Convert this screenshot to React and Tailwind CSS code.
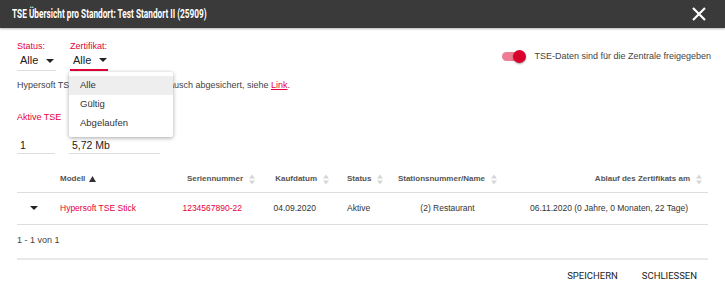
const RED = 'text-[#e4003b]'

function SortIcon({ active }) {
  if (active) {
    return (
      <svg width="7" height="6" viewBox="0 0 7 6" className="ml-1 mb-[3px]">
        <path d="M0 6 L3.5 0 L7 6 Z" fill="#333" />
      </svg>
    )
  }
  return (
    <svg width="6" height="11" viewBox="0 0 6 11" className="ml-[6px] shrink-0">
      <path d="M0 4.5 L3 0.5 L6 4.5 Z" fill="#d6d6d6" />
      <path d="M0 6.5 L3 10.5 L6 6.5 Z" fill="#d6d6d6" />
    </svg>
  )
}

function Caret() {
  return (
    <svg width="8" height="4" viewBox="0 0 8 4">
      <path d="M0 0 L8 0 L4 4 Z" fill="#222" />
    </svg>
  )
}

export default function App() {
  return (
    <div className="w-[725px] h-[298px] bg-white font-['Liberation_Sans',Arial,sans-serif] text-[#333] overflow-hidden">
      {/* Kopf */}
      <div className="h-[28px] bg-[#3a3a3a] flex items-center justify-between pl-[12px] pr-[19px] shadow-[0_1px_2px_rgba(0,0,0,0.3)]">
        <h1 className="text-white text-[12px] font-bold font-['Roboto',sans-serif] whitespace-nowrap origin-left scale-x-[0.69]">
          TSE Übersicht pro Standort: Test Standort II (25909)
        </h1>
        <svg width="14" height="14" viewBox="0 0 14 14">
          <path d="M1 1 L13 13 M13 1 L1 13" stroke="#fff" strokeWidth="2.2" />
        </svg>
      </div>

      <div className="px-[17px]">
        {/* Filter */}
        <div className="flex items-start justify-between pt-[13px]">
          <div className="flex gap-[14px]">
            <div className="w-[39px]">
              <div className={`text-[9px] leading-[10px] ${RED}`}>Status:</div>
              <div className="flex items-center gap-[8px] h-[20px] pl-[3px] border-b border-[#ddd] text-[11px] text-[#222]">
                Alle <Caret />
              </div>
            </div>
            <div className="relative w-[38px]">
              <div className={`text-[9px] leading-[10px] ${RED}`}>Zertifikat:</div>
              <div className="flex items-center gap-[8px] h-[20px] pl-[3px] border-b-2 border-[#e4003b] text-[11px] text-[#222]">
                Alle <Caret />
              </div>
              <div className="absolute left-[-1px] top-[31px] z-10 w-[104px] bg-white rounded-[2px] shadow-[0_1px_4px_rgba(0,0,0,0.35)] py-[4px] text-[9.5px] text-[#333]">
                <div className="h-[19px] flex items-center pl-[11px] bg-[#eee]">Alle</div>
                <div className="h-[19px] flex items-center pl-[11px]">Gültig</div>
                <div className="h-[19px] flex items-center pl-[11px]">Abgelaufen</div>
              </div>
            </div>
          </div>
          <div className="flex items-center gap-[8px] mr-[-3px] pt-[9px]">
            <div className="relative w-[24px] h-[12px] flex items-center">
              <div className="w-[22px] h-[9px] rounded-full bg-[#ee7d93]" />
              <div className="absolute right-0 w-[13px] h-[13px] rounded-full bg-[#d9002d] shadow-[0_1px_2px_rgba(0,0,0,0.35)]" />
            </div>
            <span className="text-[9px] text-[#444]">TSE-Daten sind für die Zentrale freigegeben</span>
          </div>
        </div>

        <p className="mt-[8px] text-[9px] text-[#444]">
          Hypersoft TSE-Daten sind gegen Austausch abgesichert, siehe{' '}
          <span className={`${RED} underline`}>Link</span>.
        </p>

        {/* Kennzahlen */}
        <div className="flex gap-[14px] mt-[19px]">
          <div className="w-[38px]">
            <div className={`text-[9px] leading-[10px] whitespace-nowrap ${RED}`}>Aktive TSE</div>
            <div className="h-[18px] mt-[14px] pl-[3px] border-b border-[#ddd] text-[10.5px] text-[#222] leading-[18px]">1</div>
          </div>
          <div className="w-[91px]">
            <div className={`text-[9px] leading-[10px] ${RED}`}>Speicher</div>
            <div className="h-[18px] mt-[14px] pl-[3px] border-b border-[#ddd] text-[10.5px] text-[#222] leading-[18px]">5,72 Mb</div>
          </div>
        </div>

        {/* Tabelle */}
        <div className="mt-[13px]">
          <div className="flex items-center h-[26px] border-b border-[#ddd] text-[8px] font-bold text-[#555]">
            <div className="w-[43px]" />
            <div className="w-[90px] flex items-end">Modell<SortIcon active /></div>
            <div className="w-[105px] flex items-center justify-end">Seriennummer<SortIcon /></div>
            <div className="w-[74px] flex items-center justify-end">Kaufdatum<SortIcon /></div>
            <div className="w-[66px] pl-[18px] flex items-center">Status<SortIcon /></div>
            <div className="w-[105px] flex items-center justify-center">Stationsnummer/Name<SortIcon /></div>
            <div className="flex-1 flex items-center justify-end pr-[6px]">Ablauf des Zertifikats am<SortIcon /></div>
          </div>
          <div className="flex items-center h-[32px] border-b border-[#ddd] text-[8.5px] text-[#333]">
            <div className="w-[43px] pl-[13px]"><Caret /></div>
            <div className={`w-[90px] whitespace-nowrap ${RED}`}>Hypersoft TSE Stick</div>
            <div className={`w-[105px] text-right pr-[13px] ${RED}`}>1234567890-22</div>
            <div className="w-[74px] text-right pr-[13px]">04.09.2020</div>
            <div className="w-[66px] pl-[18px]">Aktive</div>
            <div className="w-[105px] text-center whitespace-nowrap">(2) Restaurant</div>
            <div className="flex-1 text-right pr-[20px] whitespace-nowrap">06.11.2020 (0 Jahre, 0 Monaten, 22 Tage)</div>
          </div>
        </div>

        <div className="h-[35px] flex items-center border-b-2 border-[#e8e8e8] text-[9px] text-[#444]">1 - 1 von 1</div>

        <div className="flex justify-end gap-[24px] pr-[11px] pt-[9px] text-[9.5px] text-[#222] font-['Roboto',sans-serif]">
          <button>SPEICHERN</button>
          <button>SCHLIESSEN</button>
        </div>
      </div>
    </div>
  )
}
